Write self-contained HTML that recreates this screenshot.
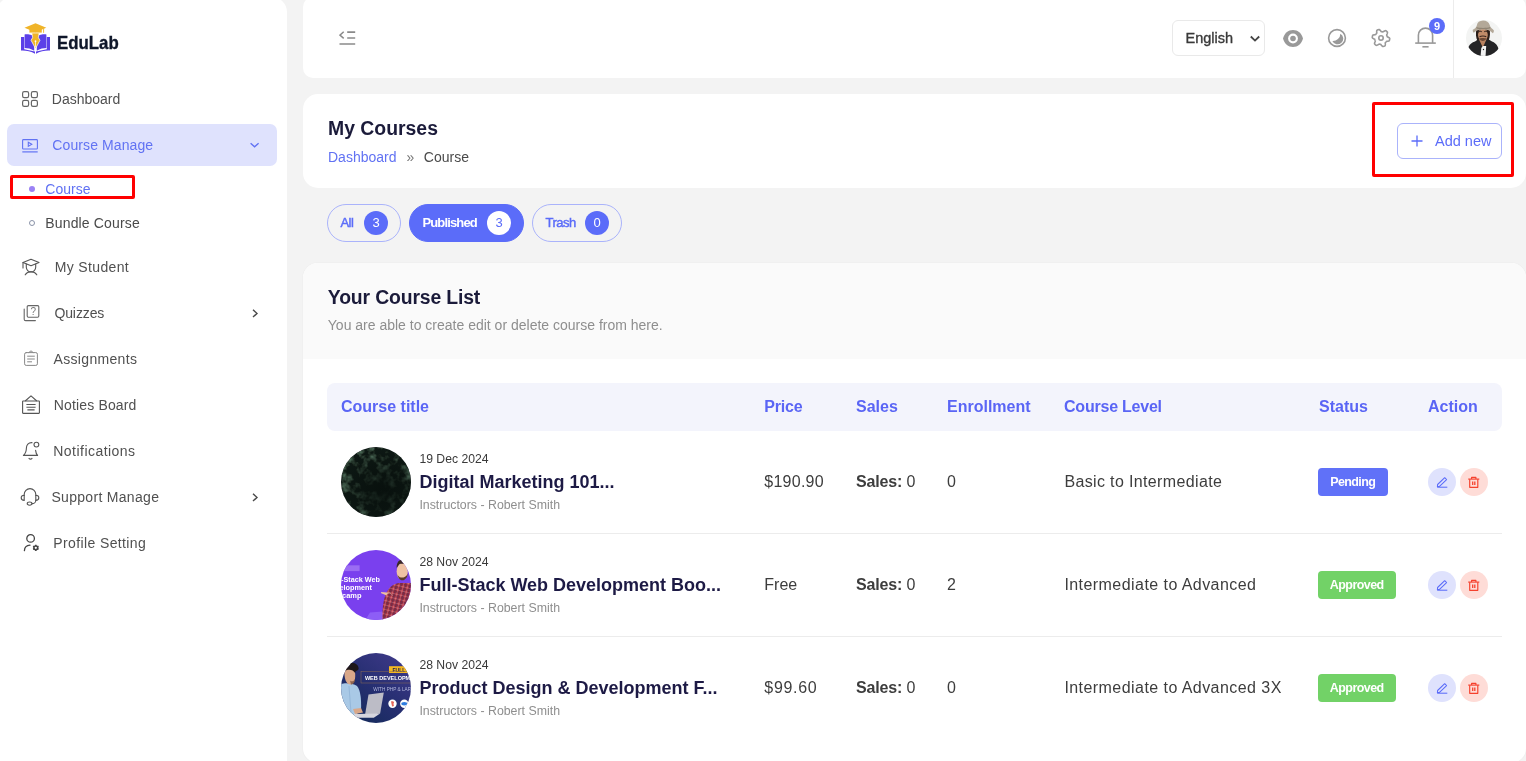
<!DOCTYPE html>
<html lang="en">
<head>
<meta charset="utf-8">
<title>EduLab - My Courses</title>
<style>
*{box-sizing:border-box;margin:0;padding:0}
html,body{width:1526px;height:761px;overflow:hidden}
body{background:#f3f3f3;font-family:"Liberation Sans",sans-serif;color:#4a4a4a;position:relative}
.abs{position:absolute}
a{text-decoration:none;color:inherit}
/* sidebar */
#sidebar{position:absolute;left:0;top:0;width:287px;height:761px}
#sidebg{position:absolute;left:-3px;top:-3px;width:290.300px;height:780px;background:#fff;border-radius:15px}
.logo{position:absolute}
.logo-text{position:absolute;left:56.600px;top:31.700px;-webkit-text-stroke:.35px #0f172a;font-weight:700;font-size:18.6px;line-height:22px;color:#0f172a;transform:scaleX(.905);transform-origin:0 50%}
.nav{position:absolute;left:7px;width:270px;height:42px;border-radius:7px}
.nav .ic{position:absolute}
.nav .tx{position:absolute;top:0;line-height:42px;font-size:14px;color:#505050;white-space:nowrap}
.nav.active{background:#dfe2fd}
.nav.active .tx{color:#6172f3}
.nav .chev{position:absolute;left:242px;top:15px}
.sub{position:absolute;left:45px;font-size:14px;line-height:20px;color:#4a4a4a;white-space:nowrap}
.bullet{position:absolute;left:29px;width:6px;height:6px;border-radius:50%}
.redbox{position:absolute;border:3px solid #ff0000;border-radius:2px}
/* header */
#topbar{position:absolute;left:303px;top:0;width:1223px;height:78px}
#topbg{position:absolute;left:0;top:-3px;width:1223px;height:81px;background:#fff;border-radius:10px}
#titlebar{position:absolute;left:303px;top:94px;width:1223px;height:94px;background:#fff;border-radius:15px}
h1{position:absolute;left:25px;top:21.500px;font-size:19.400px;line-height:24px;font-weight:700;color:#1b1b3a;white-space:nowrap}
.crumb{position:absolute;left:25px;top:52.600px;font-size:14px;line-height:20px;white-space:nowrap;color:#4a4a4a}
.crumb a{color:#6172f3}
.pill{position:absolute;top:204px;height:38px;border-radius:19px;border:1px solid #aab3fb;font-size:13px;line-height:36px;color:#5b6cf9;white-space:nowrap}
.pill .t{position:absolute;left:12.400px;top:0;font-weight:400;letter-spacing:-.45px;-webkit-text-stroke:.45px #5b6cf9}
.pill .b{position:absolute;top:6px;width:24px;height:24px;border-radius:50%;background:#5b6cf9;color:#fff;text-align:center;line-height:24px;font-size:13px}
.pill.on{background:#5b6cf9;border-color:#5b6cf9;color:#fff}
.pill.on .t{font-weight:700;letter-spacing:-.85px;-webkit-text-stroke:0}
.pill.on .b{background:#fff;color:#5b6cf9}
/* card */
#card{position:absolute;left:303px;top:263px;width:1223px;height:500px;background:#fff;border-radius:15px;box-shadow:0 0 0 1px #f0f0f0}
#cardhead{position:absolute;left:0;top:0;width:100%;height:96px;background:#fafafa;border-radius:15px 15px 0 0}
h2{position:absolute;left:24.800px;top:22.400px;letter-spacing:-.15px;font-size:19.400px;line-height:24px;font-weight:700;color:#1b1b3a;white-space:nowrap}
.desc{position:absolute;left:24.800px;top:52px;font-size:14px;line-height:20px;color:#8e8e8e;white-space:nowrap}
#thead{position:absolute;left:24px;top:120px;width:1175px;height:48px;background:#f3f4fc;border-radius:8px}
#thead span{position:absolute;top:0;line-height:47px;font-size:16px;font-weight:700;color:#5a65f5;white-space:nowrap}
.row{position:absolute;left:24px;width:1175px;height:103px;border-bottom:1px solid #ececec}
.row.last{border-bottom:none}
.thumb{position:absolute;left:14px;top:16px;width:70px;height:70px;border-radius:50%;overflow:hidden}
.date{position:absolute;left:92.400px;top:20px;font-size:12.200px;line-height:16px;color:#3a3a3a;white-space:nowrap}
.title{position:absolute;left:92.400px;top:38px;font-size:18px;line-height:26px;font-weight:700;color:#1d1a45;white-space:nowrap}
.inst{position:absolute;left:92.400px;top:66px;font-size:12.350px;line-height:16px;color:#8e8e8e;white-space:nowrap}
.cell{position:absolute;top:38.500px;font-size:16px;line-height:24px;color:#3d3d3d;white-space:nowrap}
.cell b{font-weight:700}
.badge{position:absolute;left:991px;top:37px;height:28px;border-radius:4px;color:#fff;font-size:12.500px;font-weight:700;line-height:29px;text-align:center}
.badge.p{width:70px;background:#6071f8;letter-spacing:-.64px;text-indent:-.5px}
.badge.a{width:78px;background:#72d267;letter-spacing:-.56px;text-indent:-.5px}
.act{position:absolute;top:37px;width:28px;height:28px;border-radius:50%}
.act.e{left:1101px;background:#dfe2fd}
.act.d{left:1133px;background:#fedcd7}
.act svg{position:absolute;left:7px;top:7px}
</style>
</head>
<body>

<!-- SIDEBAR -->
<div id="sidebar"><div id="sidebg"></div>
  <svg class="logo" style="left:21px;top:22.800px" width="30" height="31" viewBox="0 0 30 31">
    <path d="M0 14 H3.2 V26.2 L14 28.6 V30.8 C10 28 4 27.4 0 27.6 Z" fill="#5b40e8"/>
    <path d="M29 14 H25.800 V26.2 L15 28.6 V30.8 C19 28 25 27.4 29 27.6 Z" fill="#5b40e8"/>
    <path d="M3.600 11.400 C7 11.200 10.500 11.800 13.200 13 L13.200 27.800 C10 25.600 6.500 25 3.600 25 Z" fill="#5b40e8"/>
    <path d="M25.400 11.400 C22 11.200 18.500 11.800 15.800 13 L15.800 27.800 C19 25.600 22.500 25 25.400 25 Z" fill="#5b40e8"/>
    <path d="M10.800 10 H18.200 L17.400 14.600 L19 17.200 L14.500 25.600 L10 17.200 L11.600 14.600 Z" fill="#f0b429" stroke="#fff" stroke-width=".7"/>
    <path d="M14.500 18 V24" stroke="#fff" stroke-width=".7"/><circle cx="14.500" cy="18.200" r=".9" fill="#fff"/>
    <path d="M3.500 4.800 L14.500 .2 L25.300 4.800 L14.500 9.200 Z" fill="#f0b429"/>
    <path d="M8.400 6 H20.800 V9.600 H8.400 Z" fill="#f0b429"/>
    <path d="M22.600 5.600 V9.800" stroke="#f0b429" stroke-width=".9"/>
  </svg>
  <div class="logo-text">EduLab</div>

  <div class="nav" style="top:78px">
    <svg class="ic" style="left:15px;top:13px" width="16" height="16" viewBox="0 0 16 16" fill="none" stroke="#666" stroke-width="1.2"><rect x=".6" y=".6" width="6" height="6" rx="1.6"/><rect x="9.4" y=".6" width="6" height="6" rx="1.6"/><rect x=".6" y="9.4" width="6" height="6" rx="1.6"/><rect x="9.4" y="9.4" width="6" height="6" rx="1.6"/></svg>
    <span class="tx" style="left:44.800px">Dashboard</span>
  </div>

  <div class="nav active" style="top:124px">
    <svg class="ic" style="left:15.300px;top:14.500px" width="16" height="14" viewBox="0 0 16 14" fill="none" stroke="#6172f3" stroke-width="1.1"><rect x=".6" y=".6" width="14.8" height="9.4" rx=".8"/><path d="M6.3 3.2 L9.8 5.3 L6.3 7.4 Z"/><path d="M.3 12.9 H15.7" stroke-width="1.2"/></svg>
    <span class="tx" style="left:45.300px;letter-spacing:.1px">Course Manage</span>
    <svg class="chev" width="12" height="12" viewBox="0 0 12 12" fill="none" stroke="#6172f3" stroke-width="1.400"><path d="M1.600 4.300 L5.600 7.800 L9.600 4.300"/></svg>
  </div>

  <div class="redbox" style="left:10px;top:175px;width:125px;height:24px"></div>
  <div class="bullet" style="top:186px;background:#9b82f5"></div>
  <div class="sub" style="top:179px;left:45.300px;color:#6172f3">Course</div>
  <div class="bullet" style="top:220px;border:1px solid #8a93a8;background:#fff"></div>
  <div class="sub" style="top:213px;left:45.300px;letter-spacing:.15px">Bundle Course</div>

  <div class="nav" style="top:246px">
    <svg class="ic" style="left:15px;top:12px" width="18" height="18" viewBox="0 0 18 18" fill="none" stroke="#555" stroke-width="1.1" stroke-linecap="round" stroke-linejoin="round"><path d="M1 4.5 L9 1.3 L17 4.5 L9 7.7 Z"/><path d="M1 4.5 V10"/><path d="M4.3 6 V9.2 A4.7 4.7 0 0 0 13.7 9.2 V6"/><path d="M3.2 16.8 C4.5 14.8 6.5 13.8 9 13.8 C11.5 13.8 13.5 14.8 14.8 16.8"/></svg>
    <span class="tx" style="left:47.700px;letter-spacing:.36px">My Student</span>
  </div>

  <div class="nav" style="top:292px">
    <svg class="ic" style="left:16px;top:13px" width="17" height="17" viewBox="0 0 17 17" fill="none" stroke="#666" stroke-width="1.1" stroke-linecap="round" stroke-linejoin="round"><rect x="4.2" y=".6" width="11.6" height="11.6" rx="1.2"/><path d="M1.2 4 V14.2 A1.4 1.4 0 0 0 2.6 15.6 H12.4"/></svg>
    <span class="ic" style="left:20.200px;top:13px;font-size:10px;line-height:13px;color:#777;width:12px;text-align:center">?</span>
    <span class="tx" style="left:47.400px;letter-spacing:-.1px">Quizzes</span>
    <svg class="chev" width="10" height="12" viewBox="0 0 10 12" fill="none" stroke="#4a4a4a" stroke-width="1.400"><path d="M4 2.700 L8 6.400 L4 10.100"/></svg>
  </div>

  <div class="nav" style="top:338px">
    <svg class="ic" style="left:16px;top:12px" width="16" height="17" viewBox="0 0 16 17" fill="none" stroke="#888" stroke-width="1" stroke-linecap="round" stroke-linejoin="round"><rect x="1.600" y="2.600" width="12.800" height="12.800" rx="1.600"/><path d="M6 2.4 L8 .8 L10 2.4"/><path d="M4.6 6.2 H11.4 M4.6 9 H11.4 M4.6 11.8 H8.6"/></svg>
    <span class="tx" style="left:46.500px;letter-spacing:.33px">Assignments</span>
  </div>

  <div class="nav" style="top:384px">
    <svg class="ic" style="left:15px;top:11px" width="18" height="19" viewBox="0 0 18 19" fill="none" stroke="#555" stroke-width="1.1" stroke-linejoin="round"><rect x=".6" y="6" width="16.8" height="12.4" rx=".6"/><path d="M3.2 6 L9 .8 L14.8 6"/><path d="M4.4 9.5 H13.6 M4.4 12.2 H13.6 M5.4 14.9 H12.6"/></svg>
    <span class="tx" style="left:46.700px;letter-spacing:.16px">Noties Board</span>
  </div>

  <div class="nav" style="top:430px">
    <svg class="ic" style="left:15px;top:11px" width="19" height="20" viewBox="0 0 19 20" fill="none" stroke="#555" stroke-width="1.1" stroke-linecap="round" stroke-linejoin="round"><path d="M10 1.6 C6.4 1.4 4.4 4 4.4 7 C4.4 11 3 13 1.4 14.4 H15.6 C14.6 13.4 13.8 11.6 13.6 9.4"/><circle cx="14.4" cy="3.6" r="2.4"/><path d="M7 17.4 C7.8 18.4 9.2 18.4 10 17.4"/></svg>
    <span class="tx" style="left:46.300px;letter-spacing:.46px">Notifications</span>
  </div>

  <div class="nav" style="top:476px">
    <svg class="ic" style="left:13px;top:11px" width="20" height="20" viewBox="0 0 20 20" fill="none" stroke="#555" stroke-width="1.1" stroke-linecap="round" stroke-linejoin="round"><path d="M4.2 8.4 V7.4 A5.8 5.8 0 0 1 15.8 7.4 V8.4"/><path d="M4.2 8.2 C2.2 8.2 1.2 9.4 1.2 10.8 C1.2 12.2 2.2 13.4 4.2 13.4 Z"/><path d="M15.8 8.2 C17.8 8.2 18.8 9.4 18.8 10.8 C18.8 12.2 17.8 13.4 15.8 13.4 Z"/><path d="M15.8 13.4 C15.8 15.4 13.8 16.6 12 16.6"/><ellipse cx="9.6" cy="16.6" rx="2.4" ry="1.6"/></svg>
    <span class="tx" style="left:44.400px;letter-spacing:.31px">Support Manage</span>
    <svg class="chev" width="10" height="12" viewBox="0 0 10 12" fill="none" stroke="#4a4a4a" stroke-width="1.400"><path d="M4 2.700 L8 6.400 L4 10.100"/></svg>
  </div>

  <div class="nav" style="top:522px">
    <svg class="ic" style="left:16px;top:11px" width="18" height="20" viewBox="0 0 18 20" fill="none" stroke="#444" stroke-width="1.3" stroke-linecap="round" stroke-linejoin="round"><circle cx="7.6" cy="5.4" r="3.8"/><path d="M1.4 17.6 C1.6 14.4 3.6 12.4 7 12.2"/><circle cx="12.800" cy="14.800" r="1.900" stroke-width="1.500"/><path d="M12.800 11.700 V12.900 M12.800 16.700 V17.900 M10.100 13.250 L11.150 13.850 M14.450 15.750 L15.500 16.350 M10.100 16.350 L11.150 15.750 M14.450 13.850 L15.500 13.250" stroke-width="1.500" stroke-linecap="butt"/></svg>
    <span class="tx" style="left:46.300px;letter-spacing:.38px">Profile Setting</span>
  </div>
</div>

<!-- TOPBAR -->
<div id="topbar"><div id="topbg"></div>
  <svg class="abs" style="left:36px;top:30px" width="18" height="16" viewBox="0 0 18 16" fill="none" stroke="#8a8a8a" stroke-width="1.600"><path d="M4.700 1.800 L.9 5.100 L4.700 8.400" stroke-width="1.500"/><path d="M8.200 2.100 H16.200 M8.200 8 H16.200 M.5 13.950 H16.200"/></svg>
  <div class="abs" style="left:869px;top:20px;width:93px;height:36px;border:1px solid #e9e9e9;border-radius:6px;background:#fff"></div>
  <div class="abs" style="left:882.500px;top:27.500px;font-size:14.500px;line-height:20px;color:#3a3a3a;-webkit-text-stroke:.35px #3a3a3a;white-space:nowrap">English</div>
  <svg class="abs" style="left:947px;top:34.600px" width="10" height="8" viewBox="0 0 10 8" fill="none" stroke="#444" stroke-width="1.800"><path d="M.8 1.500 L5 5.600 L9.200 1.500"/></svg>
  <!-- eye -->
  <svg class="abs" style="left:980px;top:29.700px" width="20" height="17" viewBox="0 0 20 17"><path d="M0 8.500 C1.300 3.400 5.200 0 10 0 C14.800 0 18.700 3.400 20 8.500 C18.700 13.600 14.800 17 10 17 C5.200 17 1.300 13.600 0 8.500 Z" fill="#999"/><circle cx="10" cy="8.500" r="4.900" fill="#fff"/><circle cx="10" cy="8.500" r="2.800" fill="#999"/></svg>
  <!-- moon -->
  <svg class="abs" style="left:1024px;top:28.300px" width="20" height="20" viewBox="0 0 20 20"><circle cx="10" cy="10" r="8.400" fill="#fff" stroke="#999" stroke-width="1.600"/><path d="M13.350 5.660 A5.700 5.700 0 1 1 5.350 12.960 A7.400 7.400 0 0 0 13.350 5.660 Z" fill="#999"/></svg>
  <!-- gear -->
  <svg class="abs" style="left:1068px;top:28.400px" width="20" height="20" viewBox="0 0 20 20" fill="none" stroke="#999" stroke-width="1.600" stroke-linejoin="round"><path d="M18.42 10.00 L18.74 10.46 L18.70 10.91 L18.64 11.37 L18.56 11.82 L18.45 12.26 L18.29 12.69 L17.71 12.96 L17.06 13.14 L16.40 13.26 L15.79 13.34 L15.33 13.46 L15.14 13.73 L14.93 14.00 L14.72 14.25 L14.49 14.49 L14.27 14.75 L14.31 15.32 L14.33 15.96 L14.31 16.64 L14.21 17.29 L13.97 17.80 L13.56 17.99 L13.14 18.17 L12.70 18.32 L12.26 18.45 L11.81 18.52 L11.29 18.16 L10.81 17.69 L10.38 17.18 L10.00 16.68 L9.67 16.34 L9.34 16.32 L9.01 16.27 L8.68 16.21 L8.36 16.13 L8.03 16.07 L7.55 16.39 L7.00 16.73 L6.41 17.05 L5.79 17.29 L5.23 17.34 L4.86 17.08 L4.49 16.80 L4.15 16.50 L3.81 16.19 L3.52 15.83 L3.58 15.20 L3.74 14.54 L3.97 13.91 L4.21 13.34 L4.34 12.88 L4.20 12.58 L4.07 12.28 L3.96 11.96 L3.87 11.64 L3.75 11.33 L3.24 11.07 L2.67 10.77 L2.10 10.41 L1.58 10.00 L1.26 9.54 L1.30 9.09 L1.36 8.63 L1.44 8.18 L1.55 7.74 L1.71 7.31 L2.29 7.04 L2.94 6.86 L3.60 6.74 L4.21 6.66 L4.67 6.54 L4.86 6.27 L5.07 6.00 L5.28 5.75 L5.51 5.51 L5.73 5.25 L5.69 4.68 L5.67 4.04 L5.69 3.36 L5.79 2.71 L6.03 2.20 L6.44 2.01 L6.86 1.83 L7.30 1.68 L7.74 1.55 L8.19 1.48 L8.71 1.84 L9.19 2.31 L9.62 2.82 L10.00 3.32 L10.33 3.66 L10.66 3.68 L10.99 3.73 L11.32 3.79 L11.64 3.87 L11.97 3.93 L12.45 3.61 L13.00 3.27 L13.59 2.95 L14.21 2.71 L14.77 2.66 L15.14 2.92 L15.51 3.20 L15.85 3.50 L16.19 3.81 L16.48 4.17 L16.42 4.80 L16.26 5.46 L16.03 6.09 L15.79 6.66 L15.66 7.12 L15.80 7.42 L15.93 7.72 L16.04 8.04 L16.13 8.36 L16.25 8.67 L16.76 8.93 L17.33 9.23 L17.90 9.59 Z"/><circle cx="10" cy="10" r="2.200"/></svg>
  <!-- bell -->
  <svg class="abs" style="left:1112px;top:26px" width="21" height="22" viewBox="0 0 21 22" fill="none" stroke="#999" stroke-width="1.600"><path d="M3.400 17 V9.200 A7.100 7.100 0 0 1 17.600 9.200 V17"/><path d="M.2 17.100 H20.800"/><path d="M7.400 20.800 H13.600"/></svg>
  <div class="abs" style="left:1126px;top:18px;width:16px;height:16px;border-radius:50%;background:#5b6cf9;color:#fff;font-size:11px;font-weight:700;line-height:16px;text-align:center">9</div>
  <div class="abs" style="left:1150px;top:0;width:1px;height:78px;background:#ececec"></div>
  <!-- avatar -->
  <svg class="abs" style="left:1163px;top:20px" width="36" height="36" viewBox="0 0 36 36"><defs><clipPath id="av"><circle cx="18" cy="18" r="18"/></clipPath></defs><g clip-path="url(#av)"><rect width="36" height="36" fill="#f3f4f3"/>
  <path d="M1 36 C1 28 3 23.500 9 21.500 L12.500 19 L22 19 L26 21.500 C31 23.500 33.500 28 33.500 36 Z" fill="#242426"/>
  <path d="M13 19.500 L16.800 27.500 L20.500 19.500 Z" fill="#b9825f"/>
  <path d="M15.300 28 L16.800 26 L20.200 26 L19.600 36 L14.600 36 Z" fill="#f2f2f2"/>
  <path d="M10.400 9 C9.600 13 9.800 18 11.600 21 L13 19 L21.400 19 L22.600 20.500 C24.200 17 24.400 12 23.400 8.500 Z" fill="#2a1e19"/>
  <ellipse cx="16.900" cy="14.800" rx="4.900" ry="6.500" fill="#c08b69"/>
  <path d="M12.400 12.200 C13.500 11 15 11 15.800 11.800 M18.200 11.800 C19 11 20.500 11 21.400 12.200" stroke="#2a1e19" stroke-width="1" fill="none"/>
  <path d="M13.600 16.800 C15 15.700 18.800 15.700 20.200 16.800" stroke="#3a261d" stroke-width="1.100" fill="none"/>
  <path d="M13.300 18.600 C14.500 17.900 19 17.900 20.300 18.600 C19.600 21.800 14 21.800 13.300 18.600 Z" fill="#5a3b2b" opacity=".85"/>
  <path d="M6.800 9.800 C8.500 8.600 10.200 8 10.800 5.500 C11.400 2.200 13.400 .7 17 .5 C20.600 .7 22.800 2 23.700 5 C24.400 7.600 26 8.600 27.800 10.200 C28 11.600 27.600 12.800 26.800 13.200 C24.500 10.200 21 9.400 17 9.400 C13 9.400 10 10.200 7.800 12.800 C7 12.200 6.600 11 6.800 9.800 Z" fill="#b3a898"/>
  <path d="M10.600 7 C13 8.200 21 8.200 24 7 L24.300 8.200 C21 9.400 13 9.400 10.400 8.200 Z" fill="#8f8474"/>
  <circle cx="17.500" cy="29.500" r=".7" fill="#222"/>
  </g></svg>
</div>

<!-- TITLE BAR -->
<div id="titlebar">
  <h1>My Courses</h1>
  <div class="crumb"><a>Dashboard</a><span style="margin:0 9.500px 0 10px;color:#777">»</span>Course</div>
  <div class="abs" style="left:1094px;top:29px;width:105px;height:36px;border:1px solid #aab3fb;border-radius:6px"></div>
  <svg class="abs" style="left:1108px;top:41px" width="12" height="12" viewBox="0 0 12 12" stroke="#5b6cf9" stroke-width="1.3"><path d="M6 .5 V11.5 M.5 6 H11.5"/></svg>
  <div class="abs" style="left:1132px;top:37px;font-size:14.5px;line-height:20px;color:#5b6cf9;white-space:nowrap">Add new</div>
  <div class="redbox" style="left:1069px;top:8px;width:142px;height:75px"></div>
</div>


<!-- TABS -->
<div class="pill" style="left:327px;width:74px"><span class="t">All</span><span class="b" style="left:36px">3</span></div>
<div class="pill on" style="left:409px;width:115px"><span class="t">Published</span><span class="b" style="left:77px">3</span></div>
<div class="pill" style="left:532px;width:90px"><span class="t">Trash</span><span class="b" style="left:52px">0</span></div>

<!-- CARD -->
<div id="card">
  <div id="cardhead">
    <h2>Your Course List</h2>
    <div class="desc">You are able to create edit or delete course from here.</div>
  </div>
  <div id="thead">
    <span style="left:14px">Course title</span>
    <span style="left:437.300px;letter-spacing:-.2px">Price</span>
    <span style="left:529px">Sales</span>
    <span style="left:620px">Enrollment</span>
    <span style="left:737px;letter-spacing:-.22px">Course Level</span>
    <span style="left:992px">Status</span>
    <span style="left:1101px">Action</span>
  </div>
  <div class="row" style="top:168px">
    <div class="thumb"><svg width="70" height="70" viewBox="0 0 70 70"><defs><filter id="fol" x="0" y="0" width="100%" height="100%" color-interpolation-filters="sRGB"><feTurbulence type="fractalNoise" baseFrequency=".11" numOctaves="3" seed="7"/><feColorMatrix type="matrix" values=".9 0 0 0 -.36  1.2 0 0 0 -.46  1 0 0 0 -.39  0 0 0 0 1"/></filter><radialGradient id="dk" cx=".6" cy=".62" r=".62"><stop offset="0" stop-color="#08100d" stop-opacity=".95"/><stop offset=".55" stop-color="#08100d" stop-opacity=".55"/><stop offset="1" stop-color="#08100d" stop-opacity="0"/></radialGradient></defs><rect width="70" height="70" fill="#0d1814"/><rect width="70" height="70" filter="url(#fol)" style="mix-blend-mode:lighten"/><rect width="70" height="70" fill="url(#dk)"/></svg></div>
    <div class="date">19 Dec 2024</div>
    <div class="title">Digital Marketing 101...</div>
    <div class="inst">Instructors - Robert Smith</div>
    <div class="cell" style="left:437.300px;letter-spacing:.25px">$190.90</div>
    <div class="cell" style="left:529px;letter-spacing:-.15px"><b>Sales:</b> 0</div>
    <div class="cell" style="left:620px">0</div>
    <div class="cell" style="left:737.400px;letter-spacing:.36px">Basic to Intermediate</div>
    <div class="badge p">Pending</div>
    <a class="act e"><svg width="14" height="14" viewBox="0 0 14 14" fill="none" stroke="#5b6cf9" stroke-width="1.050" stroke-linejoin="round"><path d="M2.600 9.500 L9.700 2.700 L11.600 4.600 L4.500 11.400 L2.400 11.600 Z"/><path d="M2.200 12.200 H12.300"/></svg></a>
    <a class="act d"><svg width="14" height="14" viewBox="0 0 14 14" fill="none" stroke="#f5412d" stroke-width="1.150" stroke-linejoin="round"><path d="M1.200 4.100 H12.300"/><path d="M4.600 4 V2.300 H8.900 V4"/><path d="M2.700 4.300 V12.300 H10.800 V4.300"/><path d="M5.700 6.600 V10 M7.800 6.600 V10" stroke-width="1.300"/></svg></a>
  </div>
  <div class="row" style="top:271px">
    <div class="thumb"><svg width="70" height="70" viewBox="0 0 70 70"><defs><pattern id="pl" width="4.400" height="4.400" patternUnits="userSpaceOnUse" patternTransform="rotate(14)"><rect width="4.400" height="4.400" fill="#b8323f"/><rect width="1.500" height="4.400" fill="#6b2947"/><rect width="4.400" height="1.500" fill="#7a2c46" opacity=".85"/><rect x="3" width=".35" height="4.400" fill="#e3b5bd" opacity=".8"/><rect y="3" width="4.400" height=".35" fill="#e3b5bd" opacity=".8"/></pattern></defs><rect width="70" height="70" fill="#7a40ee"/><rect x="0" y="15.300" width="18.600" height="5.800" fill="#9b6cf3"/><text x="0" y="32.200" font-family="Liberation Sans, sans-serif" font-size="7.400" font-weight="700" fill="#fff" textLength="39" lengthAdjust="spacingAndGlyphs">-Stack Web</text><text x="-1.500" y="40.200" font-family="Liberation Sans, sans-serif" font-size="7.400" font-weight="700" fill="#fff" textLength="32.500" lengthAdjust="spacingAndGlyphs">elopment</text><text x="-1.500" y="48" font-family="Liberation Sans, sans-serif" font-size="7.400" font-weight="700" fill="#fff" textLength="22" lengthAdjust="spacingAndGlyphs">tcamp</text><path d="M24.400 70 L29 62.500 L42 61.500 L46.500 66 L46.500 70 Z" fill="#8d5ef6"/><path d="M41.500 70 C41 56 43 46 47 40 C50 35.500 54 33.500 58 33 L70 33 L70 70 Z" fill="url(#pl)"/><path d="M40 42 L49 42.800 L52 45.500 L48 47 L44.500 45 L40.200 43.200 Z" fill="#efc0a0"/><path d="M46 44 C49 42 52 44 53 50 L50 62 L43 60 Z" fill="url(#pl)"/><ellipse cx="61.200" cy="21.500" rx="5.600" ry="8.500" fill="#efc2a4"/><path d="M55.600 18 C55.600 11.500 58.500 9.500 62 9.500 C66 9.500 68 13 67.500 18 C66 14 62 13.500 58.500 14 Z" fill="#3a2a22"/><path d="M56.400 24 C57.500 32.500 65.500 32.500 67 23.500 C65 27 62 28 60 27.500 C58.500 27.500 57 26 56.400 24 Z" fill="#5b3a2a"/></svg></div>
    <div class="date">28 Nov 2024</div>
    <div class="title">Full-Stack Web Development Boo...</div>
    <div class="inst">Instructors - Robert Smith</div>
    <div class="cell" style="left:437.300px">Free</div>
    <div class="cell" style="left:529px;letter-spacing:-.15px"><b>Sales:</b> 0</div>
    <div class="cell" style="left:620px">2</div>
    <div class="cell" style="left:737.400px;letter-spacing:.44px">Intermediate to Advanced</div>
    <div class="badge a">Approved</div>
    <a class="act e"><svg width="14" height="14" viewBox="0 0 14 14" fill="none" stroke="#5b6cf9" stroke-width="1.050" stroke-linejoin="round"><path d="M2.600 9.500 L9.700 2.700 L11.600 4.600 L4.500 11.400 L2.400 11.600 Z"/><path d="M2.200 12.200 H12.300"/></svg></a>
    <a class="act d"><svg width="14" height="14" viewBox="0 0 14 14" fill="none" stroke="#f5412d" stroke-width="1.150" stroke-linejoin="round"><path d="M1.200 4.100 H12.300"/><path d="M4.600 4 V2.300 H8.900 V4"/><path d="M2.700 4.300 V12.300 H10.800 V4.300"/><path d="M5.700 6.600 V10 M7.800 6.600 V10" stroke-width="1.300"/></svg></a>
  </div>
  <div class="row last" style="top:374px">
    <div class="thumb"><svg width="70" height="70" viewBox="0 0 70 70"><defs><linearGradient id="g3" x1="0" y1="1" x2=".8" y2="0"><stop offset="0" stop-color="#102a55"/><stop offset=".55" stop-color="#272f72"/><stop offset="1" stop-color="#3d3988"/></linearGradient></defs><rect width="70" height="70" fill="url(#g3)"/><rect x="48" y="13.200" width="22" height="6.800" fill="#f5b820"/><text x="51.500" y="18.500" font-family="Liberation Sans, sans-serif" font-size="5" font-weight="700" fill="#1b2050">FULL S</text><rect x="20" y="18.400" width="52" height="11.600" fill="none" stroke="#8c6d55" stroke-width=".5"/><text x="23.900" y="27.400" font-family="Liberation Sans, sans-serif" font-size="6.200" font-weight="700" fill="#fff" textLength="49" lengthAdjust="spacingAndGlyphs">WEB DEVELOPME</text><text x="32.300" y="37.900" font-family="Liberation Sans, sans-serif" font-size="5" fill="#b3b7dc" textLength="41" lengthAdjust="spacingAndGlyphs">WITH PHP &amp; LARA</text><circle cx="51.500" cy="50.800" r="4.200" fill="#fff"/><path d="M50 48.500 C53 47.500 54 50 52 51 C54 52 52.500 54 51 53.200 Z" fill="#e5675a"/><circle cx="63.300" cy="50.800" r="4.200" fill="#fff"/><ellipse cx="63.300" cy="50.800" rx="3" ry="1.700" fill="#2f7de0"/><path d="M0 31 C4 29.500 12 30 16 33 C19.500 37 20.500 46 20 58 L14 62 L0 62 Z" fill="#a9c9e6"/><path d="M8 33 L10 60" stroke="#8fb3d6" stroke-width=".8"/><path d="M3.500 18 C3 25 5 31.500 9.500 31.500 C13 31.500 14.500 27 14.200 21 C14 17 12 14 9 14 C6 14 4 15.500 3.500 18 Z" fill="#d9a88a"/><path d="M2.500 20 C1.500 12 6 9.500 11 9.700 C15 10 18 12.500 17.600 16 C16.500 18.500 14.500 17 14.200 20 C12.500 17 9 16 6 17 C4.500 17.500 3.500 18.500 2.500 20 Z" fill="#1e1719"/><path d="M9 27.500 C10.500 29 13 28.500 14 26 C14.200 29 12.500 31.500 10 31.500 Z" fill="#7a5442" opacity=".8"/><path d="M27.500 41.600 L42.800 39.500 L39.100 60.500 L23.900 62.600 Z" fill="#bcbcc6"/><path d="M12.800 61 L39.100 60.500 L32.800 64.700 L14 64.700 Z" fill="#d6d6de"/><path d="M12 56 L20 55 L22 59.500 L14 61 Z" fill="#d9a88a"/></svg></div>
    <div class="date">28 Nov 2024</div>
    <div class="title">Product Design &amp; Development F...</div>
    <div class="inst">Instructors - Robert Smith</div>
    <div class="cell" style="left:437.300px;letter-spacing:.7px">$99.60</div>
    <div class="cell" style="left:529px;letter-spacing:-.15px"><b>Sales:</b> 0</div>
    <div class="cell" style="left:620px">0</div>
    <div class="cell" style="left:737.400px;letter-spacing:.44px">Intermediate to Advanced 3X</div>
    <div class="badge a">Approved</div>
    <a class="act e"><svg width="14" height="14" viewBox="0 0 14 14" fill="none" stroke="#5b6cf9" stroke-width="1.050" stroke-linejoin="round"><path d="M2.600 9.500 L9.700 2.700 L11.600 4.600 L4.500 11.400 L2.400 11.600 Z"/><path d="M2.200 12.200 H12.300"/></svg></a>
    <a class="act d"><svg width="14" height="14" viewBox="0 0 14 14" fill="none" stroke="#f5412d" stroke-width="1.150" stroke-linejoin="round"><path d="M1.200 4.100 H12.300"/><path d="M4.600 4 V2.300 H8.900 V4"/><path d="M2.700 4.300 V12.300 H10.800 V4.300"/><path d="M5.700 6.600 V10 M7.800 6.600 V10" stroke-width="1.300"/></svg></a>
  </div>
</div>

</body>
</html>
